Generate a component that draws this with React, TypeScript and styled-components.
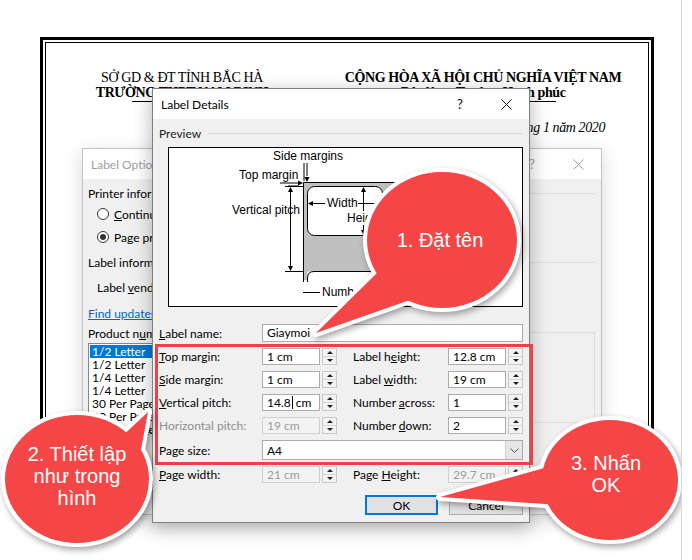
import React from 'react';
import styled, { createGlobalStyle } from 'styled-components';

const RED = '#f54647';
const UI_FONT = "Lato, 'Liberation Sans', Arial, sans-serif";

const GlobalStyle = createGlobalStyle`
  html, body { margin: 0; padding: 0; background: #fff; }
  body { overflow: hidden; }
`;

const Screen = styled.div`
  position: relative;
  width: 682px;
  height: 560px;
  box-sizing: border-box;
  border-right: 1px solid #d9d9d9;
  padding: 37px 0 0 40px;
  overflow: hidden;
  background: #fff;
`;

/* ---------- document behind the dialogs ---------- */

const DocFrame = styled.div`
  width: 614px;
  height: 463px;
  box-sizing: border-box;
  border: 3px solid #000;
  padding: 2px;
`;

const DocInner = styled.div`
  height: 100%;
  box-sizing: border-box;
  border: 1px solid #000;
  padding-top: 27px;
  font-family: 'Liberation Serif', 'Times New Roman', serif;
  font-size: 14px;
  line-height: 15px;
  letter-spacing: -0.4px;
  color: #000;
`;

const DocHeader = styled.div`
  display: grid;
  grid-template-columns: 272px 1fr;
`;

const HeadCol = styled.div`
  text-align: center;
`;

const HeadLine = styled.div<{ $bold?: boolean }>`
  font-weight: ${(p) => (p.$bold ? 700 : 400)};
  white-space: nowrap;
`;

const Ruled = styled.span<{ $rule: number }>`
  display: inline-block;
  padding-bottom: 2px;
  background: linear-gradient(#000, #000) no-repeat center bottom / ${(p) => p.$rule}% 1px;
`;

const DateLine = styled.div`
  margin-top: 18px;
  padding-right: 43px;
  text-align: right;
  font-style: italic;
`;

/* ---------- windows ---------- */

const Window = styled.div<{ $x: number; $y: number; $w: number; $h: number; $active?: boolean }>`
  position: absolute;
  left: ${(p) => p.$x}px;
  top: ${(p) => p.$y}px;
  width: ${(p) => p.$w}px;
  height: ${(p) => p.$h}px;
  box-sizing: border-box;
  display: flex;
  flex-direction: column;
  background: #f0f0f0;
  border: 1px solid ${(p) => (p.$active ? '#7f7f7f' : '#c2c2c2')};
  box-shadow: 0 5px 18px rgba(0, 0, 0, ${(p) => (p.$active ? 0.3 : 0.16)});
  font-family: ${UI_FONT};
  font-size: 12px;
  color: #000;
`;

const TitleBar = styled.div<{ $active?: boolean }>`
  flex: none;
  height: 30px;
  display: flex;
  align-items: center;
  padding-left: 8px;
  background: #fff;
  color: ${(p) => (p.$active ? '#000' : '#a0a0a0')};
`;

const TitleText = styled.span`
  flex: 1;
`;

const TitleButton = styled.span`
  width: 46px;
  height: 30px;
  display: flex;
  align-items: center;
  justify-content: center;
  font-size: 13px;
`;

const CloseIcon = ({ color }: { color: string }) => (
  <svg width="11" height="11" viewBox="0 0 11 11">
    <path d="M0.5 0.5L10.5 10.5M10.5 0.5L0.5 10.5" stroke={color} strokeWidth="1" />
  </svg>
);

/* ---------- back dialog: Label Options ---------- */

const BackBody = styled.div`
  flex: 1;
  display: flex;
  flex-direction: column;
  padding: 0 6px 0 5px;
`;

const GroupHead = styled.div<{ $mt: number }>`
  margin-top: ${(p) => p.$mt}px;
  height: 15px;
  display: flex;
  align-items: center;
  gap: 6px;
  white-space: nowrap;

  &::after {
    content: '';
    flex: 1;
    height: 1px;
    background: #dcdcdc;
  }
`;

const OptRow = styled.div<{ $mt: number; $indent?: number }>`
  margin-top: ${(p) => p.$mt}px;
  margin-left: ${(p) => p.$indent ?? 0}px;
  height: 16px;
  display: flex;
  align-items: center;
  gap: 5px;
  white-space: nowrap;
`;

const Radio = styled.span<{ $on?: boolean }>`
  position: relative;
  width: 12px;
  height: 12px;
  box-sizing: border-box;
  border: 1px solid #333;
  border-radius: 50%;
  background: #fff;

  &::after {
    content: '';
    display: ${(p) => (p.$on ? 'block' : 'none')};
    position: absolute;
    left: 2px;
    top: 2px;
    width: 6px;
    height: 6px;
    border-radius: 50%;
    background: #333;
  }
`;

const LinkText = styled.span`
  color: #0066cc;
  text-decoration: underline;
`;

const ProductArea = styled.div`
  margin-top: 4px;
  display: flex;
  align-items: flex-start;
`;

const ProductCol = styled.div`
  width: 240px;
  display: flex;
  flex-direction: column;
`;

const ListBox = styled.div`
  margin-top: 2px;
  height: 90px;
  box-sizing: border-box;
  border: 1px solid #828790;
  background: #fff;
  padding: 1px;
`;

const ListItem = styled.div<{ $selected?: boolean }>`
  height: 13px;
  line-height: 13px;
  padding-left: 2px;
  background: ${(p) => (p.$selected ? '#0078d7' : 'transparent')};
  color: ${(p) => (p.$selected ? '#fff' : '#000')};
  white-space: nowrap;
`;

const InfoBox = styled.div`
  margin: 7px 0 0 auto;
  width: 260px;
  height: 91px;
  box-sizing: border-box;
  border: 1px solid #dcdcdc;
`;

/* ---------- front dialog: Label Details ---------- */

const DlgBody = styled.div`
  flex: 1;
  display: flex;
  flex-direction: column;
  padding: 7px 6px 0 6px;
`;

const SectionHead = styled.div`
  height: 14px;
  display: flex;
  align-items: center;
  gap: 7px;
  color: #222;

  &::after {
    content: '';
    flex: 1;
    height: 1px;
    background: #d8d8d8;
  }
`;

const PreviewBox = styled.div`
  margin: 7px 0 0 9px;
  height: 160px;
  box-sizing: border-box;
  border: 1px solid #000;
  background: #fff;
`;

const FormGrid = styled.div`
  margin-top: 17px;
  display: grid;
  grid-template-columns: 103px 75px 16px 95px 75px;
  grid-template-rows: 18px repeat(4, 17px) 20px 17px;
  row-gap: 6px;
  align-items: center;
`;

const FieldLabel = styled.span<{ $col?: number; $disabled?: boolean }>`
  grid-column: ${(p) => p.$col ?? 1};
  color: ${(p) => (p.$disabled ? '#8f8f8f' : '#000')};
  white-space: nowrap;
`;

const TextBox = styled.div`
  grid-column: 2 / 6;
  height: 18px;
  box-sizing: border-box;
  border: 1px solid #ababab;
  background: #fff;
  padding-left: 4px;
  line-height: 16px;
`;

const SpinWrap = styled.div<{ $col: number }>`
  grid-column: ${(p) => p.$col};
  height: 17px;
  display: flex;
  gap: 2px;
`;

const ValueBox = styled.div<{ $disabled?: boolean }>`
  flex: 1;
  box-sizing: border-box;
  border: 1px solid ${(p) => (p.$disabled ? '#cfcfcf' : '#ababab')};
  background: ${(p) => (p.$disabled ? '#f3f3f3' : '#fff')};
  color: ${(p) => (p.$disabled ? '#9b9b9b' : '#000')};
  padding-left: 4px;
  line-height: 15px;
  white-space: nowrap;
`;

const Caret = styled.span`
  display: inline-block;
  width: 1px;
  height: 13px;
  margin: 0 3px 0 1px;
  vertical-align: -2px;
  background: #000;
`;

const Spinner = styled.div`
  width: 15px;
  box-sizing: border-box;
  border: 1px solid #c9c9c9;
  background: #f3f3f3;
  display: flex;
  flex-direction: column;
`;

const SpinHalf = styled.div<{ $down?: boolean }>`
  flex: 1;
  display: flex;
  align-items: center;
  justify-content: center;
  border-top: ${(p) => (p.$down ? '1px solid #d6d6d6' : 'none')};

  &::before {
    content: '';
    border-left: 3px solid transparent;
    border-right: 3px solid transparent;
    ${(p) => (p.$down ? 'border-top: 3px solid #222;' : 'border-bottom: 3px solid #222;')}
  }
`;

const SelectBox = styled.div`
  grid-column: 2 / 6;
  height: 20px;
  box-sizing: border-box;
  border: 1px solid #ababab;
  background: #fff;
  display: flex;
  align-items: center;
  padding-left: 4px;
`;

const SelectValue = styled.span`
  flex: 1;
`;

const DropButton = styled.span`
  width: 16px;
  height: 18px;
  display: flex;
  align-items: center;
  justify-content: center;
  background: #e6e6e6;
  border-left: 1px solid #d0d0d0;
`;

const ButtonRow = styled.div`
  margin-top: 12px;
  display: flex;
  justify-content: flex-end;
  gap: 11px;
`;

const DlgButton = styled.div<{ $primary?: boolean }>`
  width: ${(p) => (p.$primary ? 73 : 74)}px;
  height: 20px;
  box-sizing: border-box;
  border: ${(p) => (p.$primary ? '2px solid #0078d7' : '1px solid #adadad')};
  background: #e1e1e1;
  display: flex;
  align-items: center;
  justify-content: center;
`;

/* ---------- annotation overlays ---------- */

const RedFrame = styled.div`
  position: absolute;
  left: 155px;
  top: 344px;
  width: 378px;
  height: 121px;
  box-sizing: border-box;
  border: 3px solid #ea4249;
`;

const BubbleSvg = styled.svg`
  position: absolute;
  left: 0;
  top: 0;
  overflow: visible;
  pointer-events: none;
  filter: drop-shadow(2px 3px 3px rgba(0, 0, 0, 0.35));
`;

const BubbleText = styled.div<{ $x: number; $y: number }>`
  position: absolute;
  left: ${(p) => p.$x}px;
  top: ${(p) => p.$y}px;
  transform: translate(-50%, -50%);
  color: #fff;
  font-family: 'Liberation Sans', Arial, sans-serif;
  font-size: 20px;
  line-height: 22px;
  text-align: center;
  white-space: nowrap;
`;

type BubbleProps = {
  cx: number;
  cy: number;
  rx: number;
  ry: number;
  tail: string;
  tx: number;
  ty: number;
  lines: string[];
};

const Bubble = ({ cx, cy, rx, ry, tail, tx, ty, lines }: BubbleProps) => (
  <>
    <BubbleSvg width="692" height="560" viewBox="0 0 692 560">
      <g fill="#fff" stroke="#fff" strokeWidth="8" strokeLinejoin="round">
        <ellipse cx={cx} cy={cy} rx={rx} ry={ry} />
        <polygon points={tail} />
      </g>
      <g fill={RED}>
        <ellipse cx={cx} cy={cy} rx={rx} ry={ry} />
        <polygon points={tail} />
      </g>
    </BubbleSvg>
    <BubbleText $x={tx} $y={ty}>
      {lines.map((l) => (
        <div key={l}>{l}</div>
      ))}
    </BubbleText>
  </>
);

/* ---------- preview drawing ---------- */

const arrow = (x: number, y: number, dir: 'up' | 'down' | 'left' | 'right') => {
  const s = 5;
  const h = 2.5;
  const pts =
    dir === 'down'
      ? `${x - h},${y - s} ${x + h},${y - s} ${x},${y}`
      : dir === 'up'
        ? `${x - h},${y + s} ${x + h},${y + s} ${x},${y}`
        : dir === 'left'
          ? `${x + s},${y - h} ${x + s},${y + h} ${x},${y}`
          : `${x - s},${y - h} ${x - s},${y + h} ${x},${y}`;
  return <polygon points={pts} fill="#000" />;
};

const PreviewDrawing = () => (
  <svg width="353" height="158" viewBox="0 0 353 158" style={{ display: 'block' }}>
    <g fontFamily="'Liberation Sans', Arial, sans-serif" fontSize="12" fill="#000">
      {/* sheet */}
      <rect x="134" y="34" width="160" height="98" fill="#c0c0c0" />
      <rect x="138.5" y="123.5" width="156" height="11" fill="#fff" />
      <path d="M134.5 134V34.5H294" stroke="#000" fill="none" />
      <rect x="138.5" y="38.5" width="75" height="49" rx="7" fill="#fff" stroke="#000" />
      <path d="M138.5 134V130Q138.5 123.5 145 123.5H294" stroke="#000" fill="none" />

      {/* side margins */}
      <text x="104" y="12">Side margins</text>
      <line x1="135" y1="15" x2="135" y2="33" stroke="#000" />
      <line x1="138" y1="15" x2="138" y2="28" stroke="#000" />
      {arrow(138, 34, 'down')}

      {/* top margin */}
      <text x="70" y="31">Top margin</text>
      <line x1="111" y1="35" x2="130" y2="35" stroke="#000" />
      <line x1="119" y1="38" x2="130" y2="38" stroke="#000" />
      {arrow(134, 35, 'right')}

      {/* vertical pitch */}
      <text x="63" y="66">Vertical pitch</text>
      <line x1="116" y1="38.5" x2="134" y2="38.5" stroke="#000" />
      <line x1="116" y1="123.5" x2="134" y2="123.5" stroke="#000" />
      <line x1="121.5" y1="40" x2="121.5" y2="122" stroke="#000" />
      {arrow(121.5, 39, 'up')}
      {arrow(121.5, 123, 'down')}

      {/* width */}
      <line x1="140" y1="55.5" x2="156" y2="55.5" stroke="#000" />
      {arrow(139, 55.5, 'left')}
      <text x="158" y="59">Width</text>
      <line x1="189" y1="55.5" x2="211" y2="55.5" stroke="#000" />
      {arrow(213, 55.5, 'right')}

      {/* height */}
      <line x1="194.5" y1="40" x2="194.5" y2="86" stroke="#000" />
      {arrow(194.5, 39, 'up')}
      {arrow(194.5, 87, 'down')}
      <rect x="177" y="63" width="44" height="14" fill="#fff" />
      <text x="178" y="74">Height</text>

      {/* number across */}
      <line x1="134" y1="144.5" x2="151" y2="144.5" stroke="#000" />
      <text x="153" y="148">Number across</text>
    </g>
  </svg>
);

/* ---------- small parts ---------- */

const Spin = ({ col, children, disabled }: { col: number; children: React.ReactNode; disabled?: boolean }) => (
  <SpinWrap $col={col}>
    <ValueBox $disabled={disabled}>{children}</ValueBox>
    <Spinner>
      <SpinHalf />
      <SpinHalf $down />
    </Spinner>
  </SpinWrap>
);

const listItems = ['1/2 Letter', '1/2 Letter', '1/4 Letter', '1/4 Letter', '30 Per Page', '30 Per Page', '30 Per Page'];

export default function App() {
  return (
    <>
      <GlobalStyle />
      <Screen>
        <DocFrame>
          <DocInner>
            <DocHeader>
              <HeadCol>
                <HeadLine>SỞ GD &amp; ĐT TỈNH BẮC HÀ</HeadLine>
                <HeadLine $bold>
                  <Ruled $rule={58}>TRƯỜNG THPT NAM ĐỊNH</Ruled>
                </HeadLine>
              </HeadCol>
              <HeadCol>
                <HeadLine $bold>CỘNG HÒA XÃ HỘI CHỦ NGHĨA VIỆT NAM</HeadLine>
                <HeadLine $bold>
                  <Ruled $rule={88}>Độc lập – Tự do – Hạnh phúc</Ruled>
                </HeadLine>
              </HeadCol>
            </DocHeader>
            <DateLine>Bắc Hà, ngày 10 tháng 1 năm 2020</DateLine>
          </DocInner>
        </DocFrame>

        <Window $x={82} $y={148} $w={520} $h={367}>
          <TitleBar>
            <TitleText>Label Options</TitleText>
            <TitleButton>?</TitleButton>
            <TitleButton>
              <CloseIcon color="#a0a0a0" />
            </TitleButton>
          </TitleBar>
          <BackBody>
            <GroupHead $mt={7}>Printer information</GroupHead>
            <OptRow $mt={5} $indent={9}>
              <Radio />
              <span>
                <u>C</u>ontinuous-feed printers
              </span>
            </OptRow>
            <OptRow $mt={7} $indent={9}>
              <Radio $on />
              <span>
                Pa<u>g</u>e printers
              </span>
            </OptRow>
            <GroupHead $mt={10}>Label information</GroupHead>
            <OptRow $mt={9} $indent={9}>
              <span>
                Label <u>v</u>endors:
              </span>
            </OptRow>
            <OptRow $mt={10}>
              <LinkText>Find updates on Office.com</LinkText>
            </OptRow>
            <ProductArea>
              <ProductCol>
                <OptRow $mt={0}>
                  <span>
                    Product n<u>u</u>mber:
                  </span>
                </OptRow>
                <ListBox>
                  {listItems.map((item, i) => (
                    <ListItem key={i} $selected={i === 0}>
                      {item}
                    </ListItem>
                  ))}
                </ListBox>
              </ProductCol>
              <InfoBox />
            </ProductArea>
          </BackBody>
        </Window>

        <Window $x={152} $y={88} $w={378} $h={435} $active>
          <TitleBar $active>
            <TitleText>Label Details</TitleText>
            <TitleButton>?</TitleButton>
            <TitleButton>
              <CloseIcon color="#111" />
            </TitleButton>
          </TitleBar>
          <DlgBody>
            <SectionHead>Preview</SectionHead>
            <PreviewBox>
              <PreviewDrawing />
            </PreviewBox>
            <FormGrid>
              <FieldLabel>
                <u>L</u>abel name:
              </FieldLabel>
              <TextBox>Giaymoi</TextBox>

              <FieldLabel>
                <u>T</u>op margin:
              </FieldLabel>
              <Spin col={2}>1 cm</Spin>
              <FieldLabel $col={4}>
                Label h<u>e</u>ight:
              </FieldLabel>
              <Spin col={5}>12.8 cm</Spin>

              <FieldLabel>
                <u>S</u>ide margin:
              </FieldLabel>
              <Spin col={2}>1 cm</Spin>
              <FieldLabel $col={4}>
                Label <u>w</u>idth:
              </FieldLabel>
              <Spin col={5}>19 cm</Spin>

              <FieldLabel>
                <u>V</u>ertical pitch:
              </FieldLabel>
              <Spin col={2}>
                14.8
                <Caret />
                cm
              </Spin>
              <FieldLabel $col={4}>
                Number <u>a</u>cross:
              </FieldLabel>
              <Spin col={5}>1</Spin>

              <FieldLabel $disabled>Horizontal pitch:</FieldLabel>
              <Spin col={2} disabled>
                19 cm
              </Spin>
              <FieldLabel $col={4}>
                Number <u>d</u>own:
              </FieldLabel>
              <Spin col={5}>2</Spin>

              <FieldLabel>Page size:</FieldLabel>
              <SelectBox>
                <SelectValue>A4</SelectValue>
                <DropButton>
                  <svg width="9" height="5" viewBox="0 0 9 5">
                    <polyline points="0.5,0.5 4.5,4.5 8.5,0.5" fill="none" stroke="#555" />
                  </svg>
                </DropButton>
              </SelectBox>

              <FieldLabel>
                <u>P</u>age width:
              </FieldLabel>
              <Spin col={2} disabled>
                21 cm
              </Spin>
              <FieldLabel $col={4}>
                Page <u>H</u>eight:
              </FieldLabel>
              <Spin col={5} disabled>
                29.7 cm
              </Spin>
            </FormGrid>
            <ButtonRow>
              <DlgButton $primary>OK</DlgButton>
              <DlgButton>Cancel</DlgButton>
            </ButtonRow>
          </DlgBody>
        </Window>

        <RedFrame />

        <Bubble
          cx={442}
          cy={240}
          rx={75}
          ry={68}
          tail="378,272 410,300 316,333"
          tx={440}
          ty={240}
          lines={['1. Đặt tên']}
        />
        <Bubble
          cx={77}
          cy={479}
          rx={72}
          ry={64}
          tail="118,440 140,455 148,412"
          tx={77}
          ty={476}
          lines={['2. Thiết lập', 'như trong', 'hình']}
        />
        <Bubble
          cx={610}
          cy={480}
          rx={68}
          ry={60}
          tail="555,465 560,505 440,497"
          tx={606}
          ty={474}
          lines={['3. Nhấn', 'OK']}
        />
      </Screen>
    </>
  );
}
